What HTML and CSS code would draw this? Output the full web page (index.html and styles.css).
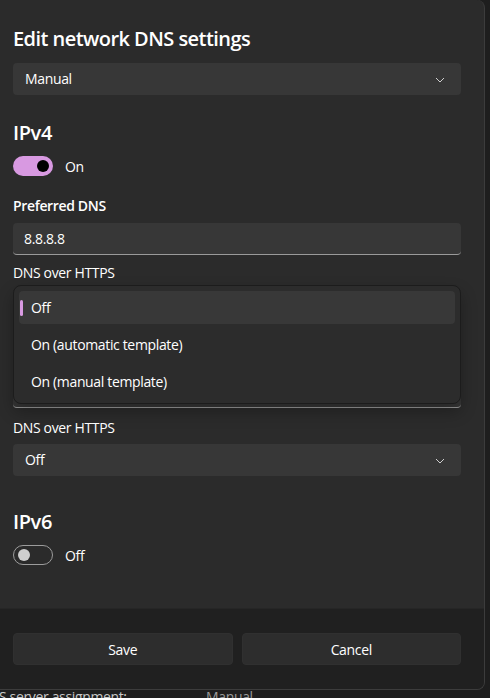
FILE: index.html
```html
<!DOCTYPE html>
<html>
<head>
<meta charset="utf-8">
<link rel="stylesheet" href="styles.css">
</head>
<body>
<div class="dialog">
  <div class="content">
    <h1 class="title">Edit network DNS settings</h1>
    <div class="select select-mode">
      <span>Manual</span>
      <svg class="chev" width="10" height="6" viewBox="0 0 10 6"><path d="M1 1 L5 5 L9 1" fill="none" stroke="#cfcfcf" stroke-width="1"/></svg>
    </div>
    <h2 class="section-title ipv4">IPv4</h2>
    <div class="toggle-row">
      <span class="toggle on"><span class="knob"></span></span>
      <span class="toggle-label">On</span>
    </div>
    <div class="field-label strong pref">Preferred DNS</div>
    <div class="input">8.8.8.8</div>
    <div class="field-label doh1">DNS over HTTPS</div>
    <div class="menu-anchor">
      <div class="select">
        <span></span>
        <svg class="chev" width="10" height="6" viewBox="0 0 10 6"><path d="M1 1 L5 5 L9 1" fill="none" stroke="#cfcfcf" stroke-width="1"/></svg>
      </div>
      <div class="popup">
        <div class="item selected"><span class="pill"></span>Off</div>
        <div class="item">On (automatic template)</div>
        <div class="item">On (manual template)</div>
      </div>
    </div>
    <div class="field-label strong alt"></div>
    <div class="input"></div>
    <div class="field-label doh2">DNS over HTTPS</div>
    <div class="select select-doh2">
      <span>Off</span>
      <svg class="chev" width="10" height="6" viewBox="0 0 10 6"><path d="M1 1 L5 5 L9 1" fill="none" stroke="#cfcfcf" stroke-width="1"/></svg>
    </div>
    <h2 class="section-title ipv6">IPv6</h2>
    <div class="toggle-row">
      <span class="toggle off"><span class="knob"></span></span>
      <span class="toggle-label">Off</span>
    </div>
  </div>
  <div class="footer">
    <button class="btn">Save</button>
    <button class="btn">Cancel</button>
  </div>
</div>
<div class="behind">
  <span class="behind-key">S server assignment:</span>
  <span class="behind-val">Manual</span>
</div>
</body>
</html>
```
FILE: styles.css
```css
* { box-sizing: border-box; }
html, body {
  margin: 0;
  padding: 0;
  height: 100%;
  overflow: hidden;
}
body {
  background: #1e1e1e;
  font-family: "Open Sans", "Noto Sans", sans-serif;
  color: #ffffff;
  font-size: 14px;
  letter-spacing: -0.35px;
}
.dialog {
  width: 485px;
  height: 690px;
  background: #2b2b2b;
  border-right: 1px solid #3c3c3c;
  border-bottom: 1px solid #3c3c3c;
  border-radius: 0 8px 8px 0;
  display: flex;
  flex-direction: column;
  overflow: hidden;
}
.content {
  flex: 1;
  padding: 25px 23px 0 13px;
  display: flex;
  flex-direction: column;
}
.title {
  margin: 0;
  font-size: 20px;
  line-height: 28px;
  font-weight: 600;
  letter-spacing: -0.55px;
}
.select {
  height: 32px;
  background: #373737;
  border-radius: 4px;
  display: flex;
  align-items: center;
  justify-content: space-between;
  padding: 0 16px 0 12px;
  line-height: 20px;
}
.select-mode { margin-top: 10px; }
.chev { display: block; margin-top: 1px; }
.section-title {
  margin: 0;
  font-size: 20px;
  line-height: 28px;
  font-weight: 600;
  letter-spacing: -0.4px;
}
.ipv4 { margin-top: 24px; }
.ipv6 { margin-top: 32px; }
.toggle-row {
  margin-top: 9px;
  height: 20px;
  display: flex;
  align-items: center;
  gap: 12px;
}
.toggle {
  width: 40px;
  height: 20px;
  border-radius: 10px;
  position: relative;
  display: block;
}
.toggle.on { background: #d899e1; }
.toggle.off { border: 1px solid #9c9c9c; }
.knob {
  position: absolute;
  width: 12px;
  height: 12px;
  border-radius: 50%;
  top: 4px;
}
.toggle.on .knob { background: #000000; left: 24px; }
.toggle.off .knob { background: #cecece; left: 4px; top: 3px; }
.toggle-label { line-height: 20px; margin-top: 2px; }
.field-label {
  line-height: 20px;
  height: 20px;
}
.field-label.strong { font-weight: 600; }
.pref { margin-top: 20px; }
.doh1 { margin-top: 8px; }
.alt { margin-top: 27px; }
.doh2 { margin-top: 10px; }
.input {
  margin-top: 7px;
  height: 32px;
  background: #373737;
  border-radius: 4px;
  border-bottom: 1px solid #9a9a9a;
  padding: 0 11px;
  display: flex;
  align-items: center;
}
.menu-anchor {
  margin-top: 7px;
  position: relative;
  z-index: 2;
}
.select-doh2 { margin-top: 6px; }
.popup {
  position: absolute;
  left: 0;
  right: 0;
  top: -5px;
  height: 119px;
  background: #2c2c2c;
  border: 1px solid #1c1c1c;
  border-radius: 8px;
  padding: 5px;
  box-shadow: 0 8px 16px rgba(0,0,0,0.28);
}
.item {
  position: relative;
  height: 33px;
  line-height: 33px;
  padding-left: 12px;
  border-radius: 4px;
  margin-bottom: 4px;
  color: #ffffff;
}
.item.selected { background: #383838; }
.pill {
  position: absolute;
  left: 1px;
  top: 9px;
  width: 3px;
  height: 16px;
  border-radius: 2px;
  background: #d899e1;
}
.footer {
  height: 81px;
  background: #202020;
  border-top: 1px solid #262626;
  padding: 24px 23px 0 13px;
  display: grid;
  grid-template-columns: 1fr 1fr;
  column-gap: 9px;
  align-content: start;
}
.btn {
  height: 32px;
  background: #2d2d2d;
  border: 1px solid #303030;
  border-radius: 4px;
  color: #ffffff;
  font-family: "Open Sans", "Noto Sans", sans-serif;
  font-size: 14px;
  letter-spacing: -0.35px;
}
.behind {
  display: flex;
  line-height: 14px;
  color: #c8c8c8;
  font-size: 14px;
}
.behind-key { width: 207px; margin-left: -1px; }
.behind-val { color: #9a9a9a; }
```
